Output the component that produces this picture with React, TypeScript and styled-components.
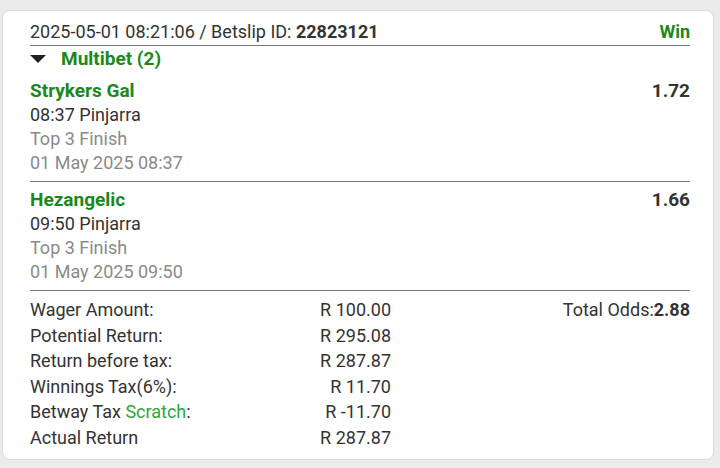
import React from "react";
import styled, { createGlobalStyle } from "styled-components";

const Global = createGlobalStyle`
  html, body { margin: 0; padding: 0; background: #ebebeb; }
  body { font-family: Roboto, "Noto Sans", Arial, sans-serif; color: #333; }
  * { box-sizing: border-box; }
`;

const Page = styled.div`
  padding: 10px 6px 8px 2px;
  height: 468px;
`;

const Card = styled.div`
  background: #fff;
  border: 1px solid #dcdcdc;
  border-radius: 8px;
  padding: 0 23px 0 27px;
  height: 450px;
`;

const Header = styled.div`
  display: flex;
  justify-content: space-between;
  align-items: center;
  padding: 10px 0 2px;
  border-bottom: 1px solid #777;
  font-size: 18px;
  line-height: 22px;
`;

const Bold = styled.b`
  font-weight: 700;
`;

const Status = styled.span`
  color: #1b881b;
  font-weight: 700;
`;

const GroupToggle = styled.div`
  display: flex;
  align-items: center;
  gap: 15px;
  height: 25px;
  color: #1b881b;
  font-weight: 700;
  font-size: 19px;
`;

const Caret = styled.span`
  width: 0;
  height: 0;
  border-left: 8px solid transparent;
  border-right: 8px solid transparent;
  border-top: 8px solid #222;
`;

const Selection = styled.div<{ $first?: boolean }>`
  display: flex;
  justify-content: space-between;
  align-items: flex-start;
  padding: ${(p) => (p.$first ? "8px" : "6px")} 0 6px;
  border-bottom: 1px solid #777;
`;

const SelInfo = styled.div`
  display: flex;
  flex-direction: column;
`;

const Line = styled.div<{ $tone?: "name" | "main" | "muted" }>`
  height: 24px;
  line-height: 24px;
  font-size: ${(p) => (p.$tone === "name" ? "19px" : "18px")};
  font-weight: ${(p) => (p.$tone === "name" ? 700 : 400)};
  color: ${(p) =>
    p.$tone === "name" ? "#1b881b" : p.$tone === "muted" ? "#8a8a8a" : "#333"};
`;

const Odds = styled.div`
  font-size: 19px;
  font-weight: 700;
  line-height: 24px;
  color: #333;
`;

const Summary = styled.div`
  display: flex;
  justify-content: space-between;
  align-items: flex-start;
  padding-top: 6px;
`;

const Table = styled.div`
  display: grid;
  grid-template-columns: 200px 161px;
  font-size: 18px;
  line-height: 25.5px;
`;

const Amount = styled.span`
  text-align: right;
`;

const Scratch = styled.span`
  color: #2fa53f;
`;

const TotalOdds = styled.div`
  font-size: 18px;
  line-height: 25.5px;
`;

const selections = [
  { name: "Strykers Gal", race: "08:37 Pinjarra", market: "Top 3 Finish", date: "01 May 2025 08:37", odds: "1.72" },
  { name: "Hezangelic", race: "09:50 Pinjarra", market: "Top 3 Finish", date: "01 May 2025 09:50", odds: "1.66" },
];

const rows: [React.ReactNode, string][] = [
  ["Wager Amount:", "R 100.00"],
  ["Potential Return:", "R 295.08"],
  ["Return before tax:", "R 287.87"],
  ["Winnings Tax(6%):", "R 11.70"],
  [<>Betway Tax <Scratch>Scratch</Scratch>:</>, "R -11.70"],
  ["Actual Return", "R 287.87"],
];

export default function App() {
  return (
    <>
      <Global />
      <Page>
        <Card>
          <Header>
            <span>
              2025-05-01 08:21:06 / Betslip ID: <Bold>22823121</Bold>
            </span>
            <Status>Win</Status>
          </Header>
          <GroupToggle>
            <Caret />
            Multibet (2)
          </GroupToggle>
          {selections.map((s, i) => (
            <Selection key={s.name} $first={i === 0}>
              <SelInfo>
                <Line $tone="name">{s.name}</Line>
                <Line $tone="main">{s.race}</Line>
                <Line $tone="muted">{s.market}</Line>
                <Line $tone="muted">{s.date}</Line>
              </SelInfo>
              <Odds>{s.odds}</Odds>
            </Selection>
          ))}
          <Summary>
            <Table>
              {rows.map(([label, value], i) => (
                <React.Fragment key={i}>
                  <span>{label}</span>
                  <Amount>{value}</Amount>
                </React.Fragment>
              ))}
            </Table>
            <TotalOdds>
              Total Odds:<Bold>2.88</Bold>
            </TotalOdds>
          </Summary>
        </Card>
      </Page>
    </>
  );
}
